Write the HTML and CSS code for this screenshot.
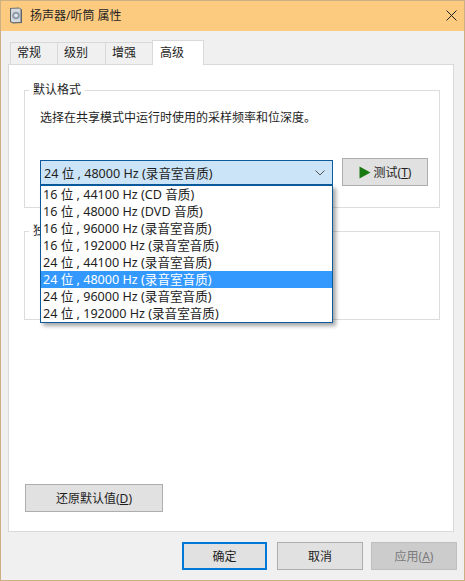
FILE: index.html
```html
<!DOCTYPE html>
<html lang="zh-CN">
<head>
  <meta charset="UTF-8" />
  <title>扬声器/听筒 属性</title>
  <link rel="stylesheet" href="styles.css">
</head>
<body>
  <div class="window">
    <div class="titlebar">
      <svg class="title-icon" width="14" height="17" viewBox="0 0 14 17">
        <path d="M1 1 L10 0.5 L13 2.5 V16 L4 16.5 L1 15 Z" fill="#5f6469"/>
        <path d="M2 1.8 L10.5 1.5 L11.5 2.5 V15 L3.5 15.3 L2 14.3 Z" fill="#d5d9de"/>
        <circle cx="7" cy="8.5" r="3.8" fill="#8f9cab"/>
        <circle cx="7" cy="8.5" r="1.8" fill="#e4e8ec"/>
      </svg>
      <span class="title-text">扬声器/听筒 属性</span>
      <svg class="close-icon" width="11" height="11" viewBox="0 0 11 11">
        <path d="M0.5 0.5 L10.5 10.5 M10.5 0.5 L0.5 10.5" stroke="#222" stroke-width="1" fill="none"/>
      </svg>
    </div>

    <div class="tabs">
      <div class="tab">常规</div>
      <div class="tab">级别</div>
      <div class="tab tab-narrow">增强</div>
      <div class="tab tab-active">高级</div>
    </div>

    <div class="panel">
      <fieldset class="group group-format">
        <legend>默认格式</legend>
        <p class="hint">选择在共享模式中运行时使用的采样频率和位深度。</p>
        <div class="format-row">
          <div class="select">
            <span>24 位 , 48000 Hz (录音室音质)</span>
            <svg width="10" height="6" viewBox="0 0 10 6">
              <path d="M0.5 0.5 L5 5 L9.5 0.5" stroke="#555" stroke-width="1" fill="none"/>
            </svg>
            <ul class="dropdown">
              <li>16 位 , 44100 Hz (CD 音质)</li>
              <li>16 位 , 48000 Hz (DVD 音质)</li>
              <li>16 位 , 96000 Hz (录音室音质)</li>
              <li>16 位 , 192000 Hz (录音室音质)</li>
              <li>24 位 , 44100 Hz (录音室音质)</li>
              <li class="selected">24 位 , 48000 Hz (录音室音质)</li>
              <li>24 位 , 96000 Hz (录音室音质)</li>
              <li>24 位 , 192000 Hz (录音室音质)</li>
            </ul>
          </div>
          <button class="btn btn-test">
            <svg width="12" height="13" viewBox="0 0 12 13">
              <path d="M0.5 0.5 L11.5 6.5 L0.5 12.5 Z" fill="#1a7a12"/>
            </svg>
            <span>测试(<u>T</u>)</span>
          </button>
        </div>
      </fieldset>

      <fieldset class="group group-exclusive">
        <legend>独占模式</legend>
      </fieldset>

      <button class="btn btn-restore">还原默认值(<u>D</u>)</button>
    </div>

    <div class="footer">
      <button class="btn btn-ok">确定</button>
      <button class="btn">取消</button>
      <button class="btn btn-disabled">应用(<u>A</u>)</button>
    </div>
  </div>
</body>
</html>
```

FILE: styles.css
```css
html, body {
  margin: 0;
  padding: 0;
}

body {
  font-family: "Noto Sans", "Noto Sans CJK SC", sans-serif;
  font-size: 12px;
  color: #1e1e1e;
}

.window {
  box-sizing: border-box;
  width: 465px;
  height: 581px;
  border: 1px solid #cdaf84;
  background-color: #f0f0f0;
  display: flex;
  flex-direction: column;
  overflow: hidden;
}

.titlebar {
  box-sizing: border-box;
  height: 30px;
  flex: none;
  background-color: #fdcb80;
  display: flex;
  align-items: center;
  padding: 0 7px 2px 8px;
}

.title-icon {
  margin-right: 7px;
}

.title-text {
  font-size: 12px;
  flex: 1;
}

.tabs {
  display: flex;
  align-items: flex-end;
  height: 33px;
  flex: none;
  padding-left: 9px;
  box-sizing: border-box;
  position: relative;
  z-index: 1;
}

.tab {
  box-sizing: border-box;
  width: 48px;
  height: 22px;
  padding-left: 6px;
  border: 1px solid #d9d9d9;
  border-left: 0;
  border-bottom: 0;
  line-height: 20px;
}

.tab:first-child {
  border-left: 1px solid #d9d9d9;
}

.tab-narrow {
  width: 47px;
}

.tab-active {
  width: 52px;
  height: 25px;
  padding-left: 7px;
  margin-bottom: -1px;
  margin-left: -1px;
  background-color: #fff;
  border-left: 1px solid #d9d9d9;
  line-height: 23px;
}

.panel {
  margin: 0 10px 0 7px;
  height: 468px;
  flex: none;
  box-sizing: border-box;
  background-color: #fff;
  border: 1px solid #d9d9d9;
  padding: 16px 13px 0 15px;
}

.group {
  margin: 0;
  padding: 0;
  width: 416px;
  box-sizing: border-box;
  border: 1px solid #dcdcdc;
  min-width: 0;
}

.group legend {
  margin-left: 4px;
  padding: 0 4px;
  line-height: 18px;
}

.group-format {
  height: 127px;
}

.group-exclusive {
  height: 98px;
  margin-top: 14px;
}

.hint {
  margin: 10px 0 0 15px;
  line-height: 18px;
}

.format-row {
  display: flex;
  align-items: flex-start;
  margin: 31px 0 0 15px;
}

.select {
  position: relative;
  box-sizing: border-box;
  width: 293px;
  height: 26px;
  margin: 2px 9px 0 0;
  background-color: #cce4f7;
  border: 1px solid #0a5a9c;
  border-bottom-width: 2px;
  display: flex;
  align-items: center;
  justify-content: space-between;
  padding: 0 7px 0 3px;
  font-size: 12.6px;
}

.dropdown {
  position: absolute;
  left: -1px;
  top: 24px;
  width: 293px;
  box-sizing: border-box;
  margin: 0;
  padding: 0;
  list-style: none;
  background-color: #fff;
  border: 1px solid #0a5a9c;
  box-shadow: 3px 3px 4px rgba(0, 0, 0, 0.35);
  z-index: 2;
}

.dropdown li {
  height: 17px;
  line-height: 17px;
  padding-left: 2px;
  white-space: nowrap;
}

.dropdown .selected {
  background-color: #3399ff;
  color: #fff;
}

.btn {
  box-sizing: border-box;
  width: 86px;
  height: 28px;
  padding: 0;
  background-color: #e1e1e1;
  border: 1px solid #adadad;
  font-family: inherit;
  font-size: 12px;
  color: #1e1e1e;
}

.btn-test {
  display: flex;
  align-items: center;
  justify-content: center;
  gap: 3px;
}

.btn-restore {
  display: block;
  width: 138px;
  margin: 164px 0 0 1px;
}

.footer {
  display: flex;
  justify-content: flex-end;
  gap: 8px;
  padding: 10px 7px 0 0;
}

.btn-ok {
  width: 85px;
  margin-right: 2px;
  border: 2px solid #0078d7;
}

.btn-disabled {
  background-color: #cccccc;
  border-color: #bfbfbf;
  color: #7a7a7a;
}
```
